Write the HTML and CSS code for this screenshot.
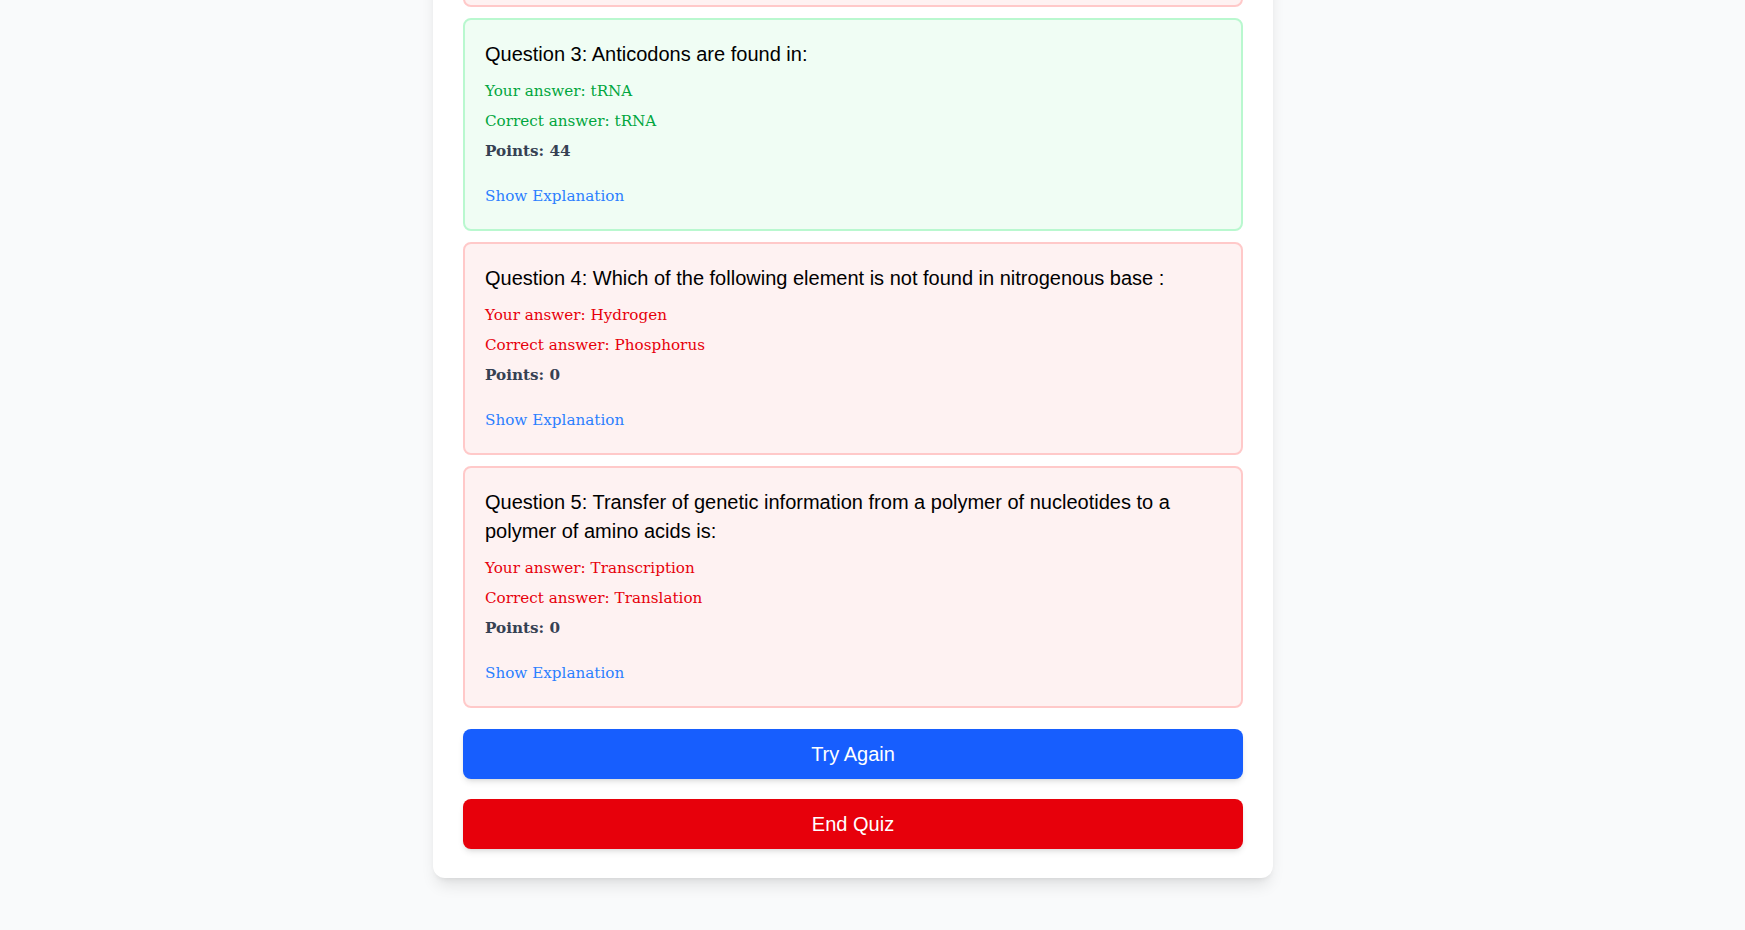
FILE: index.html
```html
<!DOCTYPE html>
<html lang="en">
<head>
<meta charset="utf-8">
<title>Quiz Results</title>
<link rel="stylesheet" href="styles.css">
</head>
<body>
<main class="page">
  <section class="results">
    <div class="question-list">
      <article class="question-card wrong">
        <h3 class="question-text">Question 2: Which enzyme joins Okazaki fragments?</h3>
        <p class="answer">Your answer: Helicase</p>
        <p class="answer">Correct answer: DNA ligase</p>
        <p class="points">Points: 0</p>
        <button class="explain-link" type="button">Show Explanation</button>
      </article>
      <article class="question-card correct">
        <h3 class="question-text">Question 3: Anticodons are found in:</h3>
        <p class="answer">Your answer: tRNA</p>
        <p class="answer">Correct answer: tRNA</p>
        <p class="points">Points: 44</p>
        <button class="explain-link" type="button">Show Explanation</button>
      </article>
      <article class="question-card wrong">
        <h3 class="question-text">Question 4: Which of the following element is not found in nitrogenous base :</h3>
        <p class="answer">Your answer: Hydrogen</p>
        <p class="answer">Correct answer: Phosphorus</p>
        <p class="points">Points: 0</p>
        <button class="explain-link" type="button">Show Explanation</button>
      </article>
      <article class="question-card wrong">
        <h3 class="question-text">Question 5: Transfer of genetic information from a polymer of nucleotides to a polymer of amino acids is:</h3>
        <p class="answer">Your answer: Transcription</p>
        <p class="answer">Correct answer: Translation</p>
        <p class="points">Points: 0</p>
        <button class="explain-link" type="button">Show Explanation</button>
      </article>
    </div>
    <div class="actions">
      <button class="btn btn-primary" type="button">Try Again</button>
      <button class="btn btn-danger" type="button">End Quiz</button>
    </div>
  </section>
</main>
</body>
</html>
```

FILE: styles.css
```css
html, body {
  margin: 0;
  padding: 0;
}

body {
  background: #f9fafb;
  font-family: "Liberation Sans", Arial, sans-serif;
  height: 100vh;
  overflow: hidden;
}

.page {
  box-sizing: border-box;
  height: 100vh;
  display: flex;
  flex-direction: column;
  justify-content: flex-end;
  padding: 0 39px 52px 0;
  overflow: hidden;
}

.results {
  flex-shrink: 0;
  box-sizing: border-box;
  width: 840px;
  margin: 0 auto;
  background: #ffffff;
  border-radius: 12px;
  box-shadow: 0 10px 15px -3px rgba(0, 0, 0, 0.1), 0 4px 6px -4px rgba(0, 0, 0, 0.1);
  padding: 30px 30px 29px 30px;
}

.question-list {
  display: flex;
  flex-direction: column;
  gap: 11px;
}

.question-card {
  border: 2px solid;
  border-radius: 8px;
  padding: 20px 20px 21px;
}

.question-card.correct {
  background: #f0fdf4;
  border-color: #b9f8cf;
}

.question-card.wrong {
  background: #fef2f2;
  border-color: #ffc9c9;
}

.question-text {
  margin: 0 0 7px;
  font-family: "Liberation Sans", Arial, sans-serif;
  font-weight: 400;
  font-size: 20px;
  line-height: 29px;
  color: #000000;
}

.answer,
.points,
.explain-link {
  font-family: Georgia, "DejaVu Serif", serif;
  font-size: 15.2px;
}

.answer,
.points {
  margin: 0;
  line-height: 30px;
}

.correct .answer {
  color: #00a63e;
}

.wrong .answer {
  color: #e7000b;
}

.points {
  font-weight: 700;
  color: #364153;
}

.explain-link {
  display: block;
  margin-top: 18px;
  padding: 0;
  border: 0;
  background: none;
  line-height: 24px;
  color: #2b7fff;
  cursor: pointer;
}

.actions {
  display: flex;
  flex-direction: column;
  gap: 20px;
  margin-top: 21px;
}

.btn {
  height: 50px;
  border: 0;
  border-radius: 8px;
  font-family: "Liberation Sans", Arial, sans-serif;
  font-size: 20px;
  color: #ffffff;
  box-shadow: 0 4px 6px -1px rgba(0, 0, 0, 0.1), 0 2px 4px -2px rgba(0, 0, 0, 0.1);
  cursor: pointer;
}

.btn-primary {
  background: #175efe;
}

.btn-danger {
  background: #e7000b;
}
```
